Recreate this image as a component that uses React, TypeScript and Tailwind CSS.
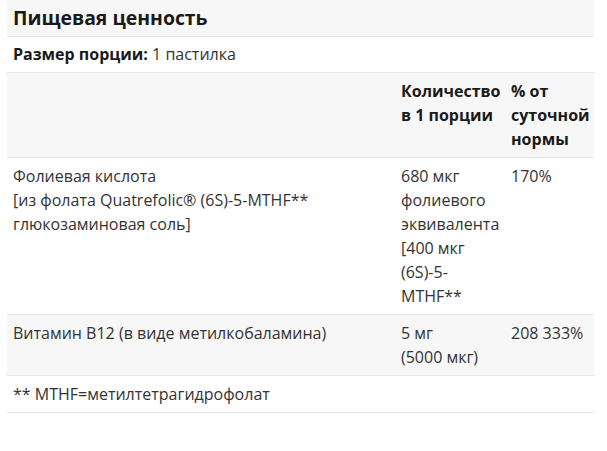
const rows = [
  {
    name: (
      <>
        Фолиевая кислота
        <br />
        [из фолата Quatrefolic® (6S)-5-MTHF**
        <br />
        глюкозаминовая соль]
      </>
    ),
    amount: <>680 мкг фолиевого эквивалента [400 мкг (6S)-5-MTHF**</>,
    dv: "170%",
    bg: "bg-white",
  },
  {
    name: "Витамин B12 (в виде метилкобаламина)",
    amount: (
      <>
        5 мг
        <br />
        (5000 мкг)
      </>
    ),
    dv: "208 333%",
    bg: "bg-[#f7f7f7]",
  },
];

const App = () => {
  return (
    <div className="w-[607px] h-[451px] bg-white pl-[7px] text-[16px] leading-[24px] text-[#333]" style={{ fontFamily: '"Open Sans", "Noto Sans", sans-serif' }}>
      <table className="w-[587px] table-fixed border-collapse">
        <colgroup>
          <col />
          <col className="w-[110px]" />
          <col className="w-[89px]" />
        </colgroup>
        <tbody>
          <tr className="bg-[#f7f7f7] border-b border-[#e6e6e6]">
            <td colSpan={3} className="px-[6px] py-[6px] text-[19.4px] leading-[24px] font-bold text-[#1a1a1a]">
              Пищевая ценность
            </td>
          </tr>
          <tr className="bg-white border-b border-[#e6e6e6]">
            <td colSpan={3} className="px-[6px] py-[6px] leading-[23px]">
              <span className="font-bold text-[#1a1a1a]">Размер порции:</span> 1 пастилка
            </td>
          </tr>
          <tr className="bg-[#f7f7f7] border-b border-[#e6e6e6] align-top">
            <td className="px-[6px] py-[6px]"></td>
            <td className="px-[6px] py-[6px] font-bold text-[#1a1a1a]">Количество в 1 порции</td>
            <td className="px-[6px] py-[6px] font-bold text-[#1a1a1a]">% от суточной нормы</td>
          </tr>
          {rows.map((r, i) => (
            <tr key={i} className={`${r.bg} border-b border-[#e6e6e6] align-top`}>
              <td className="px-[6px] py-[6px]">{r.name}</td>
              <td className="px-[6px] py-[6px]">{r.amount}</td>
              <td className="px-[6px] py-[6px]">{r.dv}</td>
            </tr>
          ))}
          <tr className="bg-white border-b border-[#e6e6e6]">
            <td colSpan={3} className="px-[6px] py-[6px]">** MTHF=метилтетрагидрофолат</td>
          </tr>
        </tbody>
      </table>
    </div>
  );
};

export default App;
